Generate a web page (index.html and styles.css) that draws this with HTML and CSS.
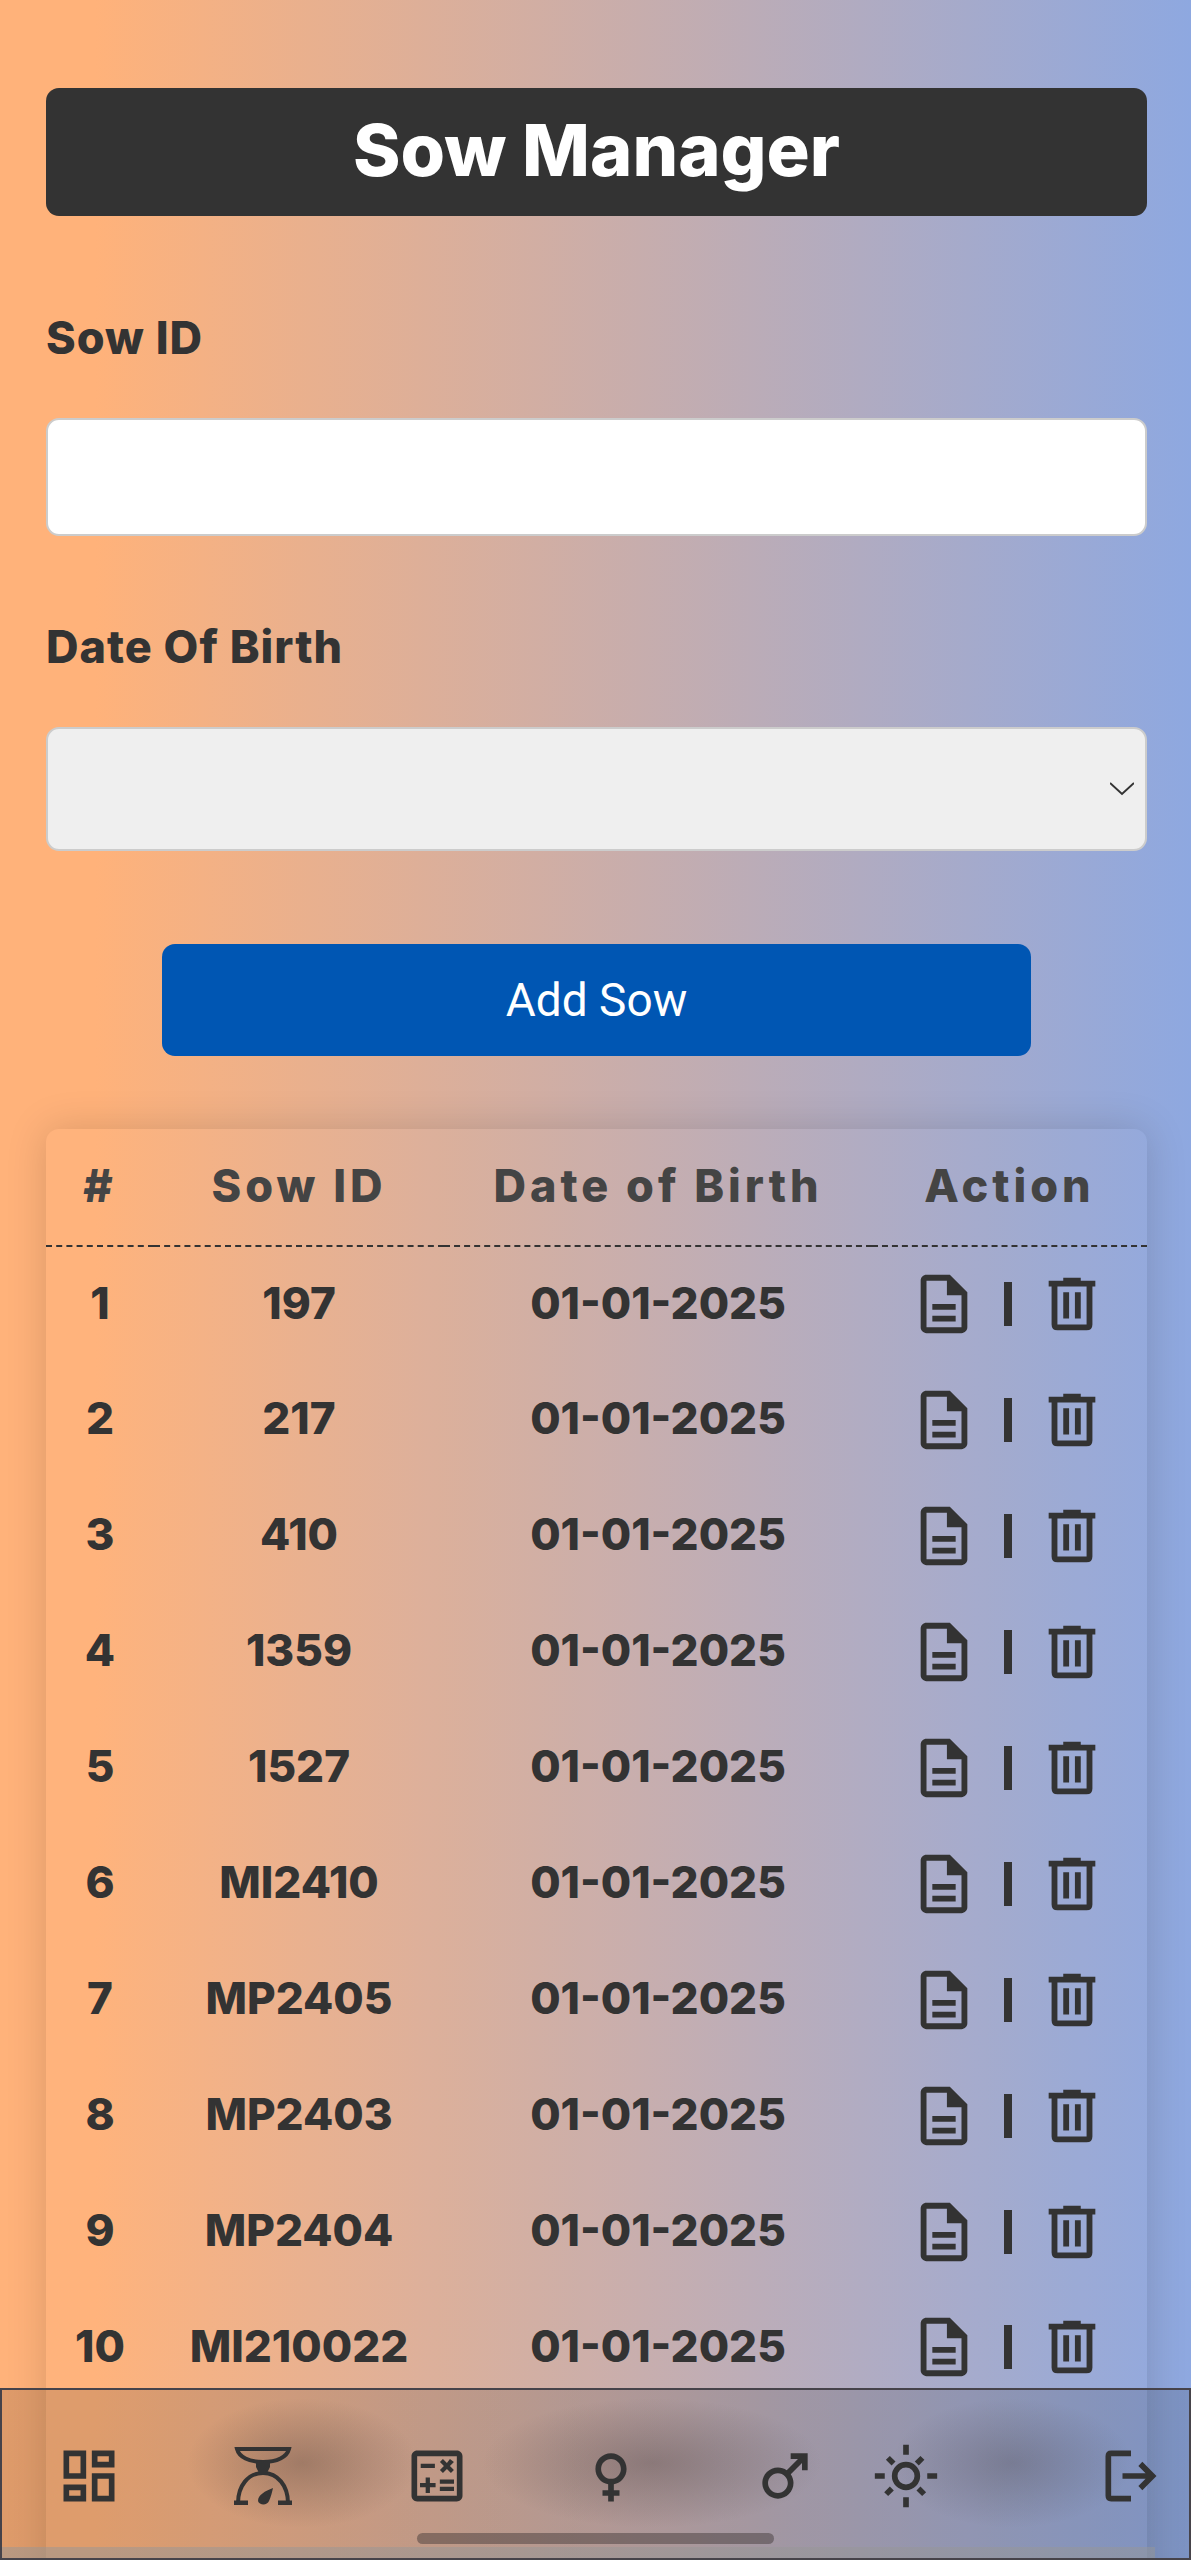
FILE: index.html
```html
<!DOCTYPE html>
<html lang="en">
<head>
    <meta charset="UTF-8">
    <meta name="viewport" content="width=device-width, initial-scale=1">
    <title>Sow Manager</title>
    <link rel="stylesheet" href="styles.css">
</head>
<body>
    <svg class="sprite">
        <symbol id="i-doc" viewBox="0 0 24 24"><path d="M8 16h8v2H8zm0-4h8v2H8zm6-10H6c-1.100 0-2 .9-2 2v16c0 1.100.9 2 2 2h12c1.100 0 2-.9 2-2V8zm4 18H6V4h7v5h5z"/></symbol>
        <symbol id="i-trash" viewBox="0 0 24 24"><path d="M7 21q-2 0-2-2V6H4V4h5V3h6v1h5v2h-1v13q0 2-2 2ZM17 6H7v13h10ZM9 17h2V8H9Zm4 0h2V8h-2Z"/></symbol>
    </svg>

    <main class="content">
        <h1 class="title">Sow Manager</h1>

        <label class="field-label" for="sow-id">Sow ID</label>
        <input class="text-input" id="sow-id" type="text">

        <label class="field-label dob-label" for="dob">Date Of Birth</label>
        <div class="select-box" id="dob">
            <svg class="chevron" viewBox="0 0 24 14"><path d="M0 1l12 11L24 1"/></svg>
        </div>

        <button class="add-btn" type="button">Add Sow</button>

        <table class="sow-table">
            <colgroup>
                <col class="col-num"><col class="col-id"><col class="col-dob"><col class="col-action">
            </colgroup>
            <thead>
                <tr><th>#</th><th>Sow ID</th><th>Date of Birth</th><th>Action</th></tr>
            </thead>
            <tbody>
                <tr><td>1</td><td>197</td><td>01-01-2025</td><td class="actions"><svg class="icon"><use href="#i-doc"/></svg><span class="divider"></span><svg class="icon"><use href="#i-trash"/></svg></td></tr>
                <tr><td>2</td><td>217</td><td>01-01-2025</td><td class="actions"><svg class="icon"><use href="#i-doc"/></svg><span class="divider"></span><svg class="icon"><use href="#i-trash"/></svg></td></tr>
                <tr><td>3</td><td>410</td><td>01-01-2025</td><td class="actions"><svg class="icon"><use href="#i-doc"/></svg><span class="divider"></span><svg class="icon"><use href="#i-trash"/></svg></td></tr>
                <tr><td>4</td><td>1359</td><td>01-01-2025</td><td class="actions"><svg class="icon"><use href="#i-doc"/></svg><span class="divider"></span><svg class="icon"><use href="#i-trash"/></svg></td></tr>
                <tr><td>5</td><td>1527</td><td>01-01-2025</td><td class="actions"><svg class="icon"><use href="#i-doc"/></svg><span class="divider"></span><svg class="icon"><use href="#i-trash"/></svg></td></tr>
                <tr><td>6</td><td>MI2410</td><td>01-01-2025</td><td class="actions"><svg class="icon"><use href="#i-doc"/></svg><span class="divider"></span><svg class="icon"><use href="#i-trash"/></svg></td></tr>
                <tr><td>7</td><td>MP2405</td><td>01-01-2025</td><td class="actions"><svg class="icon"><use href="#i-doc"/></svg><span class="divider"></span><svg class="icon"><use href="#i-trash"/></svg></td></tr>
                <tr><td>8</td><td>MP2403</td><td>01-01-2025</td><td class="actions"><svg class="icon"><use href="#i-doc"/></svg><span class="divider"></span><svg class="icon"><use href="#i-trash"/></svg></td></tr>
                <tr><td>9</td><td>MP2404</td><td>01-01-2025</td><td class="actions"><svg class="icon"><use href="#i-doc"/></svg><span class="divider"></span><svg class="icon"><use href="#i-trash"/></svg></td></tr>
                <tr><td>10</td><td>MI210022</td><td>01-01-2025</td><td class="actions"><svg class="icon"><use href="#i-doc"/></svg><span class="divider"></span><svg class="icon"><use href="#i-trash"/></svg></td></tr>
                <tr class="spacer-row"><td colspan="4"></td></tr>
            </tbody>
        </table>
    </main>

    <nav class="bottom-nav">
        <svg class="nav-icon" viewBox="0 0 24 24"><path d="M19 5v2h-4V5h4M9 5v6H5V5h4m10 8v6h-4v-6h4M9 17v2H5v-2h4M21 3h-8v6h8V3zM11 3H3v10h8V3zm10 8h-8v10h8V11zm-10 4H3v6h8v-6z"/></svg>
        <svg class="nav-icon" viewBox="-5 -5 68 68"><path class="scale-line" d="M3 2h52c-2 8-12 13-26 13S5 10 3 2zM4 56c0-17 10-30 25-30s25 13 25 30"/><path d="M22 15h14v5l-3 6h-8l-3-6zM0 53.500h14v4.500H0zM44 53.500h14v4.500H44zM39 41c-8 3-15 7-15 13 1 4 9 5 11 0 2-4 3-9 4-13z"/></svg>
        <svg class="nav-icon" viewBox="0 0 24 24"><path d="M19 3H5c-1.100 0-2 .9-2 2v14c0 1.100.9 2 2 2h14c1.100 0 2-.9 2-2V5c0-1.100-.9-2-2-2zm0 16H5V5h14v14zM6.250 7.720h5v1.500h-5zM13 15.750h5v1.500h-5zm0-2.500h5v1.500h-5zM8 18h1.500v-2h2v-1.500h-2v-2H8v2H6V16h2zm6.090-7.050l1.410-1.410 1.410 1.410 1.060-1.060-1.410-1.420 1.410-1.410L16.560 6 15.500 7.410 14.090 6l-1.060 1.060 1.410 1.410-1.410 1.420z"/></svg>
        <svg class="nav-icon" viewBox="0 0 24 24"><path d="M17.500 9.500C17.500 6.460 15.040 4 12 4S6.500 6.460 6.500 9.500c0 2.700 1.940 4.930 4.500 5.400V17H9v2h2v2h2v-2h2v-2h-2v-2.100c2.560-.47 4.500-2.700 4.500-5.400zm-9 0C8.500 7.570 10.070 6 12 6s3.500 1.570 3.500 3.500S13.930 13 12 13s-3.500-1.570-3.500-3.500z"/></svg>
        <svg class="nav-icon" viewBox="0 0 24 24"><path d="M9.500 11c1.930 0 3.500 1.570 3.500 3.500S11.430 18 9.500 18 6 16.430 6 14.500 7.570 11 9.500 11zm0-2C6.460 9 4 11.460 4 14.500S6.460 20 9.500 20s5.500-2.460 5.500-5.500c0-1.160-.36-2.230-.97-3.120L18 7.420V10h2V4h-6v2h2.580l-3.970 3.970C11.730 9.360 10.660 9 9.500 9z"/></svg>
        <svg class="nav-icon nav-sun" viewBox="0 0 24 24"><path d="M11 1h2v3.500h-2zM11 19.500h2V23h-2zM1 11h3.500v2H1zM19.500 11H23v2h-3.500zM4.900 6.300l1.400-1.400 2 2-1.400 1.400zM15.700 17.100l1.400-1.400 2 2-1.400 1.400zM17.100 4.900l1.400 1.400-2 2-1.400-1.400zM6.300 15.700l1.400 1.400-2 2-1.400-1.400z"/><path fill-rule="evenodd" d="M12 7a5 5 0 1 0 0 10 5 5 0 0 0 0-10zm0 2a3 3 0 1 1 0 6 3 3 0 0 1 0-6z"/></svg>
        <svg class="nav-icon nav-logout" viewBox="0 0 24 24"><path d="M5 21q-2 0-2-2V5q0-2 2-2h7v2H5v14h7v2zM16 17l-1.400-1.450L17.150 13H9v-2h8.150L14.600 8.450 16 7l5 5z"/></svg>
        <div class="home-pill"></div>
    </nav>
</body>
</html>
```

FILE: styles.css
```css
html, body {
    margin: 0;
    padding: 0;
}
body {
    width: 1191px;
    height: 2560px;
    overflow: hidden;
    position: relative;
    font-family: Inter, "Liberation Sans", sans-serif;
    color: #333;
    background: linear-gradient(90deg, #ffb27a 0%, #ffb27a 8%, #8ea8e0 100%);
}
.sprite {
    display: none;
}
.content {
    padding: 88px 44px 0 46px;
}
.title {
    margin: 0;
    height: 128px;
    line-height: 124px;
    background: #333;
    border-radius: 13px;
    color: #fff;
    font-size: 72px;
    font-weight: 800;
    text-align: center;
}
.field-label {
    display: block;
    margin-top: 92px;
    font-size: 45px;
    line-height: 60px;
    font-weight: 800;
    letter-spacing: 1px;
}
.dob-label {
    margin-top: 81px;
}
.text-input {
    display: block;
    box-sizing: border-box;
    width: 100%;
    height: 118px;
    margin-top: 50px;
    background: #fff;
    border: 2px solid #ccc;
    border-radius: 13px;
}
.select-box {
    box-sizing: border-box;
    display: flex;
    align-items: center;
    justify-content: flex-end;
    height: 124px;
    margin-top: 50px;
    padding-right: 11px;
    background: #efefef;
    border: 2px solid #ccc;
    border-radius: 13px;
}
.chevron {
    width: 24px;
    height: 14px;
    fill: none;
    stroke: #333;
    stroke-width: 2;
}
.add-btn {
    display: block;
    width: 869px;
    height: 112px;
    margin: 93px auto 0;
    background: #0056b3;
    color: #fff;
    border: 0;
    border-radius: 13px;
    font-family: Roboto, sans-serif;
    font-size: 46px;
}
.sow-table {
    width: 100%;
    margin-top: 73px;
    table-layout: fixed;
    border-collapse: separate;
    border-spacing: 0;
    border-radius: 13px;
    background: rgba(255, 255, 255, 0.02);
    box-shadow: 0 0 40px rgba(0, 0, 0, 0.15);
}
.col-num { width: 108px; }
.col-id { width: 290px; }
.col-dob { width: 428px; }
th {
    height: 113px;
    padding: 0 0 3px;
    border-bottom: 2px dashed #333;
    color: #444;
    font-size: 45px;
    font-weight: 800;
    letter-spacing: 4px;
}
td {
    height: 111px;
    padding: 0 0 4.900px;
    text-align: center;
    font-size: 44px;
    font-weight: 800;
}
.actions {
    padding: 0 3px 1px 0;
    vertical-align: middle;
}
.icon {
    display: inline-block;
    vertical-align: middle;
    width: 70px;
    height: 70px;
    fill: #333;
}
.divider {
    display: inline-block;
    vertical-align: middle;
    width: 8px;
    height: 44px;
    margin: 0 25px;
    background: #333;
}
.spacer-row td {
    height: 240px;
}
.bottom-nav {
    position: absolute;
    left: 0;
    right: 0;
    bottom: 0;
    box-sizing: border-box;
    height: 172px;
    display: flex;
    align-items: center;
    gap: 106px;
    padding: 4px 24px 0 53px;
    border: 2px solid #46434a;
    background-image:
        linear-gradient(rgba(150, 150, 150, 0.5), rgba(150, 150, 150, 0.5)),
        radial-gradient(ellipse 115px 65px at 300px 73px, rgba(60, 50, 50, 0.3), transparent),
        radial-gradient(ellipse 170px 65px at 650px 73px, rgba(60, 50, 50, 0.3), transparent),
        radial-gradient(ellipse 120px 65px at 1010px 73px, rgba(60, 50, 50, 0.25), transparent),
        linear-gradient(rgba(0, 0, 0, 0.13), rgba(0, 0, 0, 0.13));
    background-repeat: no-repeat;
    background-size: 1153px 11px, auto, auto, auto, auto;
    background-position: left bottom, center, center, center, center;
}
.nav-icon {
    flex: none;
    width: 68px;
    height: 68px;
    fill: #333;
}
.nav-sun {
    margin-left: -53px;
}
.nav-logout {
    margin-left: auto;
}
.scale-line {
    fill: none;
    stroke: #333;
    stroke-width: 4;
}
.home-pill {
    position: absolute;
    left: 415px;
    bottom: 14px;
    width: 357px;
    height: 11px;
    border-radius: 6px;
    background: rgba(60, 50, 50, 0.45);
}
```
